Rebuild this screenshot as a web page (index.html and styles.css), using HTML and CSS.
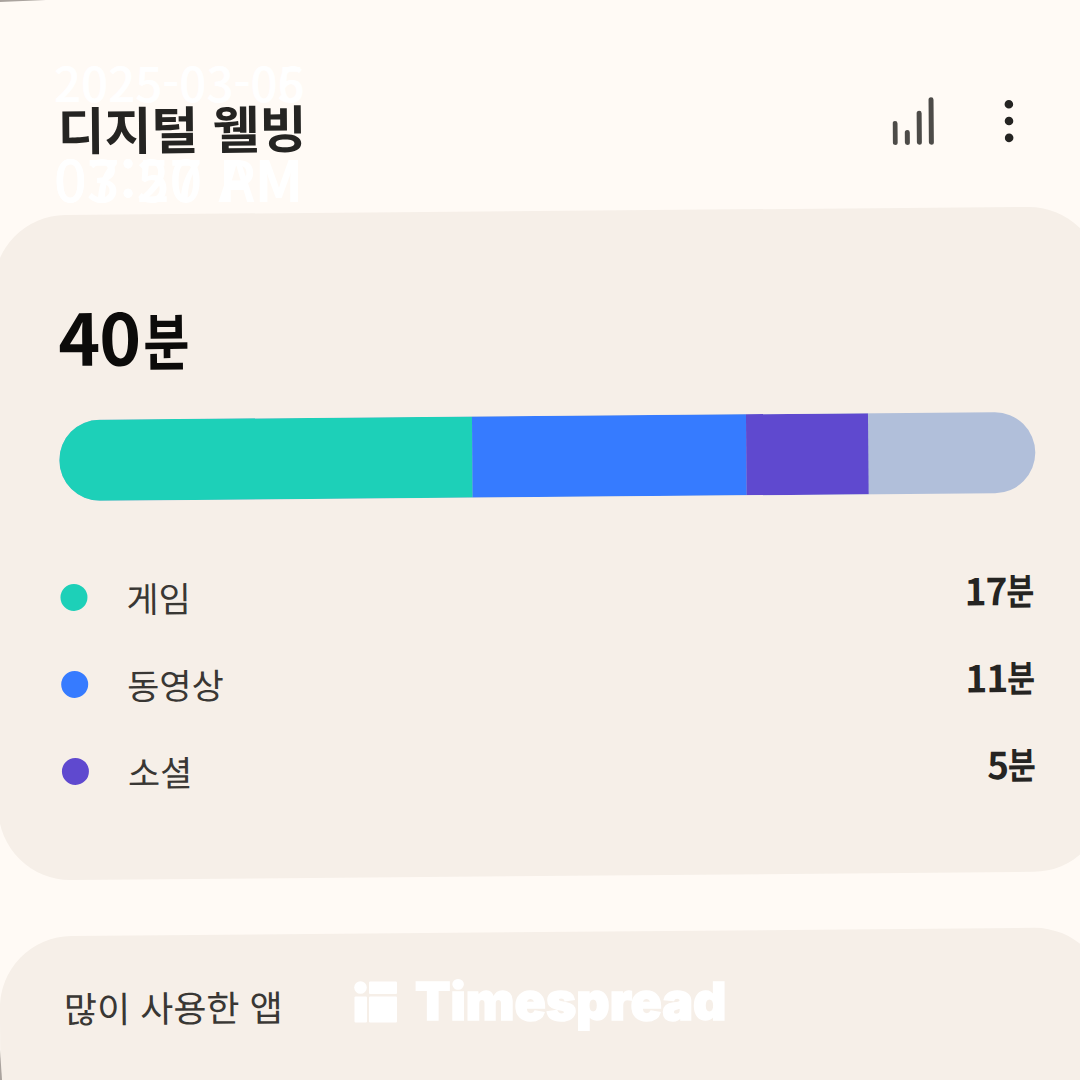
FILE: index.html
```html
<!DOCTYPE html>
<html lang="ko">
<head>
<meta charset="utf-8">
<title>디지털 웰빙</title>
<link rel="stylesheet" href="styles.css">
</head>
<body>
<div class="screen">
  <header class="header">
    <h1 class="title">디지털 웰빙</h1>
    <div class="actions">
      <svg class="icon-chart" width="44" height="50" viewBox="0 0 44 50" aria-hidden="true">
        <path d="M2.500 27.500V46.500M14.700 36.500V46.500M26.700 17.500V46.500M38.700 4V46.500"/>
      </svg>
      <svg class="icon-more" width="12" height="46" viewBox="0 0 12 46" aria-hidden="true">
        <circle cx="5.500" cy="6.200" r="4.300"/><circle cx="5.500" cy="23" r="4.300"/><circle cx="5.500" cy="39.800" r="4.300"/>
      </svg>
    </div>
  </header>
  <main class="cards">
    <section class="card usage">
      <p class="total">40<span class="unit">분</span></p>
      <div class="bar">
        <span class="seg game"></span>
        <span class="seg video"></span>
        <span class="seg social"></span>
      </div>
      <ul class="legend">
        <li class="row"><span class="dot game"></span><span class="label">게임</span><strong class="value">17<span class="unit">분</span></strong></li>
        <li class="row"><span class="dot video"></span><span class="label">동영상</span><strong class="value">11<span class="unit">분</span></strong></li>
        <li class="row"><span class="dot social"></span><span class="label">소셜</span><strong class="value">5<span class="unit">분</span></strong></li>
      </ul>
    </section>
    <section class="card apps">
      <h2 class="apps-title">많이 사용한 앱</h2>
    </section>
  </main>
</div>
<div class="edge edge-top"></div>
<div class="edge edge-left"></div>
<div class="stamp">
  <div class="stamp-layer"><span class="date">2025-03-06</span><span class="time">07:27 PM</span></div>
  <div class="stamp-layer second"><span class="date">2025-03-05</span><span class="time">03:50 AM</span></div>
</div>
<div class="brand">
  <svg width="44" height="42" viewBox="0 0 44 42" aria-hidden="true">
    <circle cx="6.500" cy="6.500" r="6.300"/>
    <rect x="15" y="0.500" width="28" height="12.500" rx="1"/>
    <rect x="0.500" y="15.500" width="12.500" height="26" rx="1"/>
    <rect x="15" y="15.500" width="28" height="26" rx="1"/>
  </svg>
  <span class="brand-name">Timespread</span>
</div>
</body>
</html>
```
FILE: styles.css
```css
* { box-sizing: border-box; margin: 0; padding: 0; }

html, body { width: 1080px; height: 1080px; overflow: hidden; }

body {
  position: relative;
  background: #fffaf5;
  font-family: "Noto Sans CJK KR", sans-serif;
  color: #252422;
}

.screen {
  width: 1107px;
  height: 1100px;
  margin-left: -4px;
  display: flex;
  flex-direction: column;
  transform: rotate(-0.48deg);
  transform-origin: 544px 540px;
}

.header {
  flex: none;
  height: 211px;
  padding: 88px 84px 0 65px;
  display: flex;
  justify-content: space-between;
}

.title {
  height: 72px;
  line-height: 72px;
  font-size: 51px;
  font-weight: 700;
  white-space: nowrap;
}

.actions { display: flex; gap: 67px; padding-top: 11px; }
.icon-chart { fill: none; stroke: #4d4b48; stroke-width: 5; stroke-linecap: round; }
.icon-more { fill: #252422; margin-top: 3px; }

.cards { display: flex; flex-direction: column; gap: 56px; }

.card { border-radius: 72px; background: #f6efe8; }

.usage { height: 665px; padding: 72px 67px 0 64px; }

.total {
  height: 96px;
  line-height: 96px;
  margin-bottom: 37px;
  font-size: 71px;
  font-weight: 700;
  letter-spacing: -1px;
  color: #0c0b0a;
}

/* The unit syllable is narrower than the digits beside it */
.unit { display: inline-block; transform-origin: left center; }
.total .unit { margin-left: 3px; font-size: 62px; line-height: 60px; transform: scaleX(0.81); }
.value .unit { font-size: 37px; line-height: 40px; margin-right: -5px; transform: scaleX(0.82); }

.bar {
  display: flex;
  height: 81px;
  border-radius: 41px;
  overflow: hidden;
  background: #b1bfda;
}

.game { background: #1dd0b8; }
.video { background: #367bff; }
.social { background: #5f49cf; }

.seg.game { width: 413px; }
.seg.video { width: 274px; }
.seg.social { width: 122px; }

.legend { list-style: none; margin-top: 53px; }
.row { display: flex; align-items: center; height: 87px; }
.dot { width: 27px; height: 27px; border-radius: 50%; }
.label { margin-left: 39px; font-size: 35px; line-height: 48px; color: #393734; }
.value { margin-left: auto; padding: 0 2px 1px 0; font-size: 37px; line-height: 48px; letter-spacing: -1px; }

.apps { height: 165px; border-radius: 72px 72px 0 0; padding: 45px 67px 0 64px; }
.apps-title {
  font-size: 36px;
  line-height: 52px;
  font-weight: 400;
  color: #393734;
}

/* Dark surround showing past the tilted screen's corners */
.edge { position: absolute; left: 0; background: #aaa39e; }
.edge-top { top: 0; width: 46px; height: 2px; clip-path: polygon(0 0, 100% 0, 0 100%); }
.edge-left { bottom: 0; width: 2px; height: 30px; clip-path: polygon(0 0, 100% 100%, 0 100%); }

/* Timestamp overlay */
.stamp { position: absolute; left: 54px; top: 55px; color: #fff; }
.stamp-layer { display: flex; flex-direction: column; white-space: nowrap; }
.second { position: absolute; left: 0; top: 0; }
.date { height: 54px; line-height: 54px; font-size: 47.5px; font-weight: 500; }
.time { margin-top: 36px; height: 64px; line-height: 64px; font-size: 57.5px; font-weight: 500; }

/* Brand overlay */
.brand {
  position: absolute;
  left: 354px;
  top: 981px;
  display: flex;
  gap: 17px;
  fill: #fff;
  color: #fff;
}
.brand-name {
  font-family: Inter, sans-serif;
  font-size: 51.700px;
  line-height: 40px;
  font-weight: 900;
  -webkit-text-stroke: 1.5px #fff;
}
```
